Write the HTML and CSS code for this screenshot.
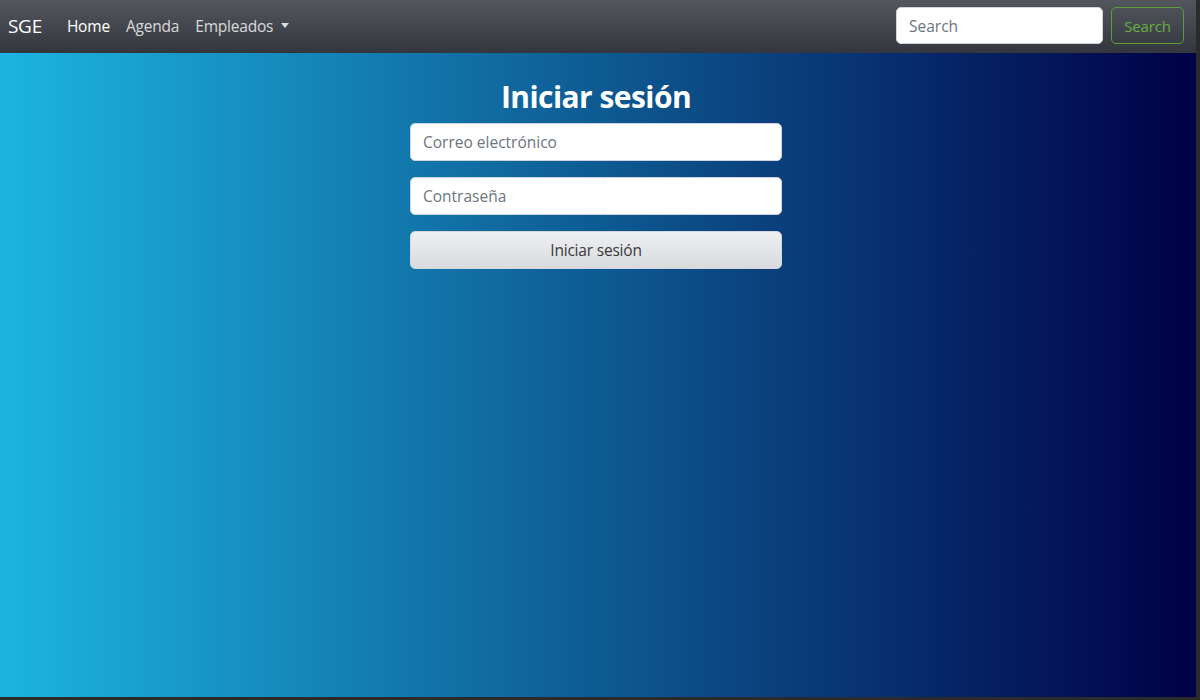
FILE: index.html
```html
<!DOCTYPE html>
<html lang="es">
<head>
<meta charset="utf-8">
<title>SGE</title>
<link rel="stylesheet" href="styles.css">
</head>
<body>
<div class="frame">
  <nav class="navbar">
    <a class="brand" href="#">SGE</a>
    <ul class="nav">
      <li><a class="nav-link active" href="#">Home</a></li>
      <li><a class="nav-link" href="#">Agenda</a></li>
      <li><a class="nav-link dropdown" href="#">Empleados<span class="caret"></span></a></li>
    </ul>
    <form class="search">
      <input class="search-input" type="text" placeholder="Search">
      <button class="search-btn" type="button">Search</button>
    </form>
  </nav>
  <main class="main">
    <div class="login">
      <h1 class="title">Iniciar sesión</h1>
      <input class="field" type="email" placeholder="Correo electrónico">
      <input class="field" type="password" placeholder="Contraseña">
      <button class="submit" type="button">Iniciar sesión</button>
    </div>
  </main>
</div>
</body>
</html>
```

FILE: styles.css
```css
* { box-sizing: border-box; }
html, body { margin: 0; height: 100%; }
body {
  background: #2b2b2b;
  font-family: "Open Sans", "Noto Sans", sans-serif;
  font-size: 16px;
  color: #212529;
}
.frame {
  width: 1196px;
  height: 697px;
  display: flex;
  flex-direction: column;
}
.navbar {
  height: 53px;
  flex: 0 0 53px;
  display: flex;
  align-items: center;
  padding: 0 12px 2px 8px;
  background: linear-gradient(180deg, #53575d, #33373d);
}
.brand {
  color: #fff;
  text-decoration: none;
  font-size: 19px;
  margin-right: 17px;
  letter-spacing: -0.3px;
}
.nav {
  list-style: none;
  margin: 0;
  padding: 0;
  display: flex;
}
.nav-link {
  display: inline-flex;
  align-items: center;
  padding: 8px 8px;
  color: rgba(255,255,255,0.8);
  text-decoration: none;
  font-size: 15.5px;
  letter-spacing: -0.2px;
}
.nav-link.active { color: #fff; }
.caret {
  display: inline-block;
  margin-left: 8px;
  border-top: 5px solid rgba(255,255,255,0.8);
  border-left: 4px solid transparent;
  border-right: 4px solid transparent;
}
.search {
  margin-left: auto;
  display: flex;
  gap: 8px;
}
.search-input {
  width: 207px;
  height: 37px;
  border: 1px solid #ced4da;
  border-radius: 5px;
  padding: 6px 12px;
  font: inherit;
  font-size: 15.5px;
  background: #fff;
}
.search-input::placeholder { color: #6c757d; }
.search-btn {
  height: 37px;
  width: 73px;
  padding: 0;
  border: 1px solid #5e9c34;
  border-radius: 5px;
  background: transparent;
  color: #6aad3e;
  font: inherit;
  font-size: 15px;
  letter-spacing: -0.2px;
}
.main {
  flex: 1;
  background: linear-gradient(90deg, #1cb5e0, #000046);
  display: flex;
  justify-content: center;
  padding: 25px 4px 0 0;
}
.login {
  width: 372px;
  display: flex;
  flex-direction: column;
}
.title {
  margin: 0 0 8px;
  text-align: center;
  color: #fff;
  font-size: 30px;
  font-weight: 700;
  line-height: 37px;
  letter-spacing: -0.55px;
}
.field {
  height: 38px;
  margin-bottom: 16px;
  border: 1px solid #ced4da;
  border-radius: 5px;
  padding: 6px 12px;
  font: inherit;
  font-size: 15.5px;
  background: #fff;
}
.field::placeholder { color: #6c757d; }
.submit {
  height: 38px;
  border: 1px solid #d3d6da;
  border-radius: 5px;
  background: linear-gradient(180deg, #eef0f3, #d8dade);
  color: #3a3a3a;
  font: inherit;
  font-size: 15.5px;
  letter-spacing: -0.2px;
}
```
